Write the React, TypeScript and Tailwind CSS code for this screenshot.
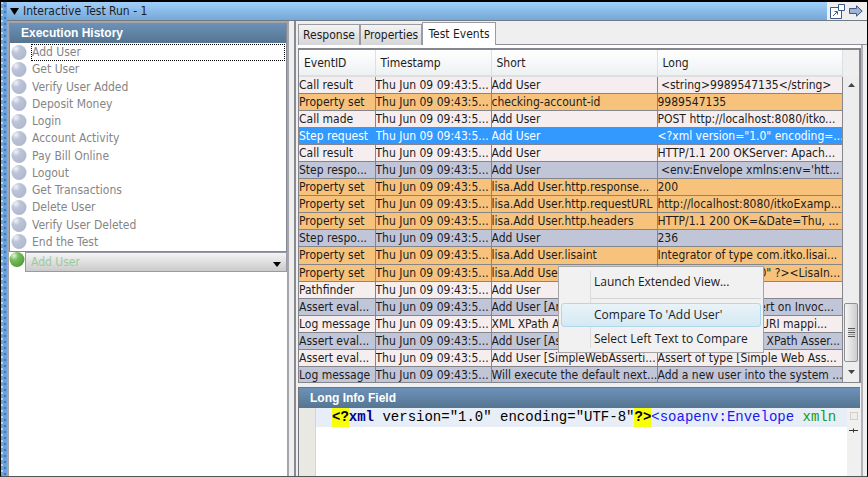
import clsx from 'clsx'

type Kind = 'plain' | 'property' | 'step' | 'selected'

interface TestEvent {
  id: string
  short: string
  long: string
  kind: Kind
}

const steps = [
  'Add User',
  'Get User',
  'Verify User Added',
  'Deposit Money',
  'Login',
  'Account Activity',
  'Pay Bill Online',
  'Logout',
  'Get Transactions',
  'Delete User',
  'Verify User Deleted',
  'End the Test',
]

const events: TestEvent[] = [
  { id: 'Call result', short: 'Add User', long: ' <string>9989547135</string>', kind: 'plain' },
  { id: 'Property set', short: 'checking-account-id', long: '9989547135', kind: 'property' },
  { id: 'Call made', short: 'Add User', long: 'POST http://localhost:8080/itko...', kind: 'plain' },
  { id: 'Step request', short: 'Add User', long: '<?xml version="1.0" encoding=...', kind: 'selected' },
  { id: 'Call result', short: 'Add User', long: 'HTTP/1.1 200 OKServer: Apach...', kind: 'plain' },
  { id: 'Step respo...', short: 'Add User', long: " <env:Envelope xmlns:env='htt...", kind: 'step' },
  { id: 'Property set', short: 'lisa.Add User.http.response...', long: '200', kind: 'property' },
  { id: 'Property set', short: 'lisa.Add User.http.requestURL', long: 'http://localhost:8080/itkoExamp...', kind: 'property' },
  { id: 'Property set', short: 'lisa.Add User.http.headers', long: 'HTTP/1.1 200 OK=&Date=Thu, ...', kind: 'property' },
  { id: 'Step respo...', short: 'Add User', long: '236', kind: 'step' },
  { id: 'Property set', short: 'lisa.Add User.lisaint', long: 'Integrator of type com.itko.lisai...', kind: 'property' },
  { id: 'Property set', short: 'lisa.Add User', long: '<?xml version="1.0" ?><LisaIn...', kind: 'property' },
  { id: 'Pathfinder', short: 'Add User', long: '', kind: 'plain' },
  { id: 'Assert eval...', short: 'Add User [An', long: 'Assert of type [Assert on Invoc...', kind: 'step' },
  { id: 'Log message', short: 'XML XPath A', long: 'Added namespace URI mappi...', kind: 'plain' },
  { id: 'Assert eval...', short: 'Add User [As', long: 'Assert of type [XML XPath Asser...', kind: 'step' },
  { id: 'Assert eval...', short: 'Add User [SimpleWebAsserti...', long: 'Assert of type [Simple Web Ass...', kind: 'plain' },
  { id: 'Log message', short: 'Will execute the default next...', long: 'Add a new user into the system ...', kind: 'step' },
]

const rowColors: Record<Kind, string> = {
  plain: 'bg-[#f6eeee]',
  property: 'bg-[#f7c37c]',
  step: 'bg-[#c1c5d8]',
  selected: 'bg-[#3399ff] text-white',
}

function Ball({ green }: { green?: boolean }) {
  const id = green ? 'ball-green' : 'ball-gray'
  return (
    <svg viewBox="0 0 16 16" className="size-4 shrink-0" aria-hidden="true">
      <defs>
        <radialGradient id={id} cx="0.3" cy="0.25" r="0.75">
          <stop offset="0" stopColor={green ? '#e4f6dc' : '#f1f3f8'} />
          <stop offset="0.4" stopColor={green ? '#77bd5c' : '#bcc4d9'} />
          <stop offset="1" stopColor={green ? '#55a03c' : '#b1b9d0'} />
        </radialGradient>
      </defs>
      <circle cx="8" cy="7.500" r="7.500" fill={`url(#${id})`} />
    </svg>
  )
}

function PanelTitle({ children }: { children: string }) {
  return (
    <h2 className="h-5 shrink-0 bg-linear-to-b from-[#6d92b9] to-[#557591] pl-[11px] font-['Liberation_Sans'] text-xs leading-5 font-bold text-white">
      {children}
    </h2>
  )
}

function TitleBar() {
  return (
    <header className="flex h-[19px] shrink-0 border-b border-[#737b84] bg-[#efefef]">
      <div className="flex flex-1 items-center bg-linear-to-b from-[#a0cffb] to-[#75a8d6]">
        <button className="flex items-center gap-1 pl-[3px] leading-4">
          <svg viewBox="0 0 9 7" className="h-[7px] w-[9px]" aria-hidden="true">
            <path d="M0 0h9L4.500 7z" />
          </svg>
          Interactive Test Run - 1
        </button>
      </div>
      <div className="flex w-[40px] items-center gap-1 pl-[3px]">
        <button aria-label="Undock">
          <svg viewBox="0 0 15 15" className="size-[15px]" fill="#fff" stroke="#3d5a8f" aria-hidden="true">
            <path d="M.5 3.500h11v11H.5z" />
            <path d="M8.500.5h6v6h-6z" />
            <path d="M3 12l4-4M4.500 7.500h3v3" fill="none" />
          </svg>
        </button>
        <button aria-label="Next">
          <svg viewBox="0 0 14 12" className="h-3 w-3.5" fill="#a3b3cf" stroke="#3d5a8f" aria-hidden="true">
            <path d="M.5 3.500h7V.8L13.200 6 7.500 11.200V8.500h-7z" />
          </svg>
        </button>
      </div>
    </header>
  )
}

function ExecutionHistory() {
  return (
    <aside className="flex w-[282px] shrink-0 flex-col border-x-2 border-t-2 border-[#a3a5aa] bg-white">
      <div className="border-r border-b border-l border-[#868a94]">
        <PanelTitle>Execution History</PanelTitle>
        <ul className="flex h-[208px] flex-col pt-px text-[#858585]">
          {steps.map((step, i) => (
            <li key={step} className="flex min-h-0 flex-1 items-center gap-1 pr-px pl-px">
              <Ball />
              <span
                className={clsx(
                  'flex-1 border border-dotted leading-[15px]',
                  i === 0 ? 'border-black' : 'border-transparent',
                )}
              >
                {step}
              </span>
            </li>
          ))}
        </ul>
      </div>
      <div className="flex items-start">
        <Ball green />
        <div className="relative flex-1">
          <select
            aria-label="Current step"
            className="block h-5 w-full appearance-none border border-[#9799a5] bg-linear-to-b from-[#f4f4f4] to-[#cbcbcb] pl-[5px] text-[#98cd99]"
          >
            <option>Add User</option>
          </select>
          <svg viewBox="0 0 8 5" className="pointer-events-none absolute top-2.5 right-1.5 h-[5px] w-2" aria-hidden="true">
            <path d="M0 0h8L4 5z" />
          </svg>
        </div>
      </div>
    </aside>
  )
}

function Tabs() {
  const tab = 'h-[21px] border border-b-0 border-[#9a9ca3] bg-linear-to-b from-[#f4f4f4] to-[#d6d6d9]'
  return (
    <div role="tablist" className="flex h-6 shrink-0 items-end">
      <button role="tab" className={clsx(tab, 'w-[62px]')}>
        Response
      </button>
      <button role="tab" className={clsx(tab, 'w-[62px]')}>
        Properties
      </button>
      <button role="tab" aria-selected="true" className="h-[23px] w-[74px] border border-b-0 border-[#9a9ca3] bg-white">
        Test Events
      </button>
      <div className="flex-1 border-b border-[#8d9097]" />
    </div>
  )
}

function EventTable() {
  return (
    <div className="min-w-0 flex-1">
      <table className="h-[334px] w-full table-fixed border-collapse text-left whitespace-pre">
        <colgroup>
          <col className="w-[76px]" />
          <col className="w-[116px]" />
          <col className="w-[166px]" />
          <col />
        </colgroup>
        <thead>
          <tr className="h-[26px] bg-linear-to-b from-white to-[#edf0f2]">
            {['EventID', 'Timestamp', 'Short', 'Long'].map((name) => (
              <th key={name} className="border-r border-b-2 border-[#dedfe1] p-0 pl-[5px] font-normal">
                {name}
              </th>
            ))}
          </tr>
        </thead>
        <tbody className="leading-4">
          {events.map((event, i) => (
            <tr key={i} className={rowColors[event.kind]}>
              {[event.id, 'Thu Jun 09 09:43:5...', event.short, event.long].map((text, col) => (
                <td key={col} className="overflow-hidden border-r border-b border-[#85868c] p-0">
                  {text}
                </td>
              ))}
            </tr>
          ))}
        </tbody>
      </table>
    </div>
  )
}

function ScrollBar() {
  return (
    <div className="mt-[26px] flex h-[306px] w-4 shrink-0 flex-col items-center bg-[#ededed]">
      <button aria-label="Scroll up" className="flex h-[17px] items-center">
        <svg viewBox="0 0 7 4" className="h-1 w-[7px]" fill="#444" aria-hidden="true">
          <path d="M0 4h7L3.500 0z" />
        </svg>
      </button>
      <div className="flex-1" />
      <div className="flex h-[59px] w-3.5 flex-col items-center justify-center gap-px rounded-xs border border-[#8f9094] bg-linear-to-r from-[#f5f5f5] to-[#cdcdd0]">
        <span className="h-px w-[7px] bg-[#555]" />
        <span className="h-px w-[7px] bg-[#999]" />
        <span className="h-px w-[7px] bg-[#555]" />
        <span className="h-px w-[7px] bg-[#999]" />
        <span className="h-px w-[7px] bg-[#555]" />
      </div>
      <button aria-label="Scroll down" className="flex h-5 items-center">
        <svg viewBox="0 0 7 4" className="h-1 w-[7px]" fill="#444" aria-hidden="true">
          <path d="M0 0h7L3.500 4z" />
        </svg>
      </button>
    </div>
  )
}

function ContextMenu() {
  return (
    <div
      role="menu"
      className="absolute top-[221px] left-[260px] flex w-[206px] flex-col border border-[#a5a5a5] bg-[#f1f1f1] p-[2px] font-['Open_Sans',sans-serif]"
    >
      <div className="absolute inset-y-1 left-[31px] border-l border-[#dcdcdc]" />
      <button role="menuitem" className="relative h-[26px] pl-[33px] text-left">
        Launch Extended View...
      </button>
      <hr className="mt-[3px] mb-1 ml-[30px] border-[#d5d5d5]" />
      <button
        role="menuitem"
        className="relative h-6 rounded-[3px] border border-[#aed9ec] bg-linear-to-b from-[#e9f3f8] to-[#d5e9f3] pl-8 text-left leading-5"
      >
        Compare To 'Add User'
      </button>
      <button role="menuitem" className="relative h-[23px] pl-[33px] text-left">
        Select Left Text to Compare
      </button>
    </div>
  )
}

function LongInfoField() {
  return (
    <section className="mt-1 flex min-h-0 flex-1 flex-col border-t border-l border-[#6f747b]">
      <PanelTitle>Long Info Field</PanelTitle>
      <div className="flex min-h-0 flex-1 bg-white">
        <div className="w-[17px] shrink-0 border-r border-[#d5d5d5] bg-[#e9e8e2]" />
        <pre className="h-[19px] flex-1 overflow-hidden bg-[#e8eef8] pl-4 font-['Liberation_Mono',monospace] text-sm leading-[19px] text-black">
          <span className="inline-block bg-[#f7ff0a] font-bold">&lt;?</span>
          <span className="font-bold text-[#00008b]">xml</span> version="1.0" encoding="UTF-8"
          <span className="inline-block bg-[#f7ff0a] font-bold">?&gt;</span>
          <span className="text-[#1a1aee]">&lt;soapenv:Envelope</span>{' '}
          <span className="text-[#169a16]">xmln</span>
        </pre>
        <div className="flex w-[13px] shrink-0 flex-col items-center gap-2 bg-[#f0f0f0] pt-1">
          <span className="size-2 border border-[#d0d0c8] bg-[#eeeeea]" />
          <svg viewBox="0 0 9 5" className="h-[5px] w-[9px]" stroke="#333" aria-hidden="true">
            <path d="M0 2.500h9M4.500.5v4" />
          </svg>
        </div>
      </div>
    </section>
  )
}

export default function App() {
  return (
    <div className="flex h-screen overflow-hidden border border-t-2 border-black border-b-[#555] bg-[#efefef] font-['DejaVu_Sans_Condensed','DejaVu_Sans',sans-serif] text-xs text-[#1c1c1c]">
      <div className="w-1.5 shrink-0 bg-[#6ba2dc] bg-[radial-gradient(circle_at_1px_1px,#b5d8f8_1px,transparent_1px),radial-gradient(circle_at_4px_4px,#4478b4_1px,transparent_1px)] bg-size-[6px_6px]" />
      <div className="flex min-w-0 flex-1 flex-col">
        <TitleBar />
        <div className="flex min-h-0 flex-1 gap-[5px]">
          <ExecutionHistory />
          <main className="flex min-w-0 flex-1 flex-col border-l-2 border-[#888a8f] pl-[2px]">
            <Tabs />
            <div className="relative mr-1 border-r-2 border-[#b3b3b9] bg-white pt-[3px]">
              <div className="flex h-[335px] items-start overflow-hidden border-t-2 border-r-2 border-b border-l border-[#85868c] bg-[#efefef]">
                <EventTable />
                <ScrollBar />
              </div>
              <ContextMenu />
            </div>
            <div className="mr-1 flex min-h-0 flex-1 flex-col border-r-2 border-[#b3b3b9] pr-px">
              <LongInfoField />
            </div>
          </main>
        </div>
      </div>
    </div>
  )
}
